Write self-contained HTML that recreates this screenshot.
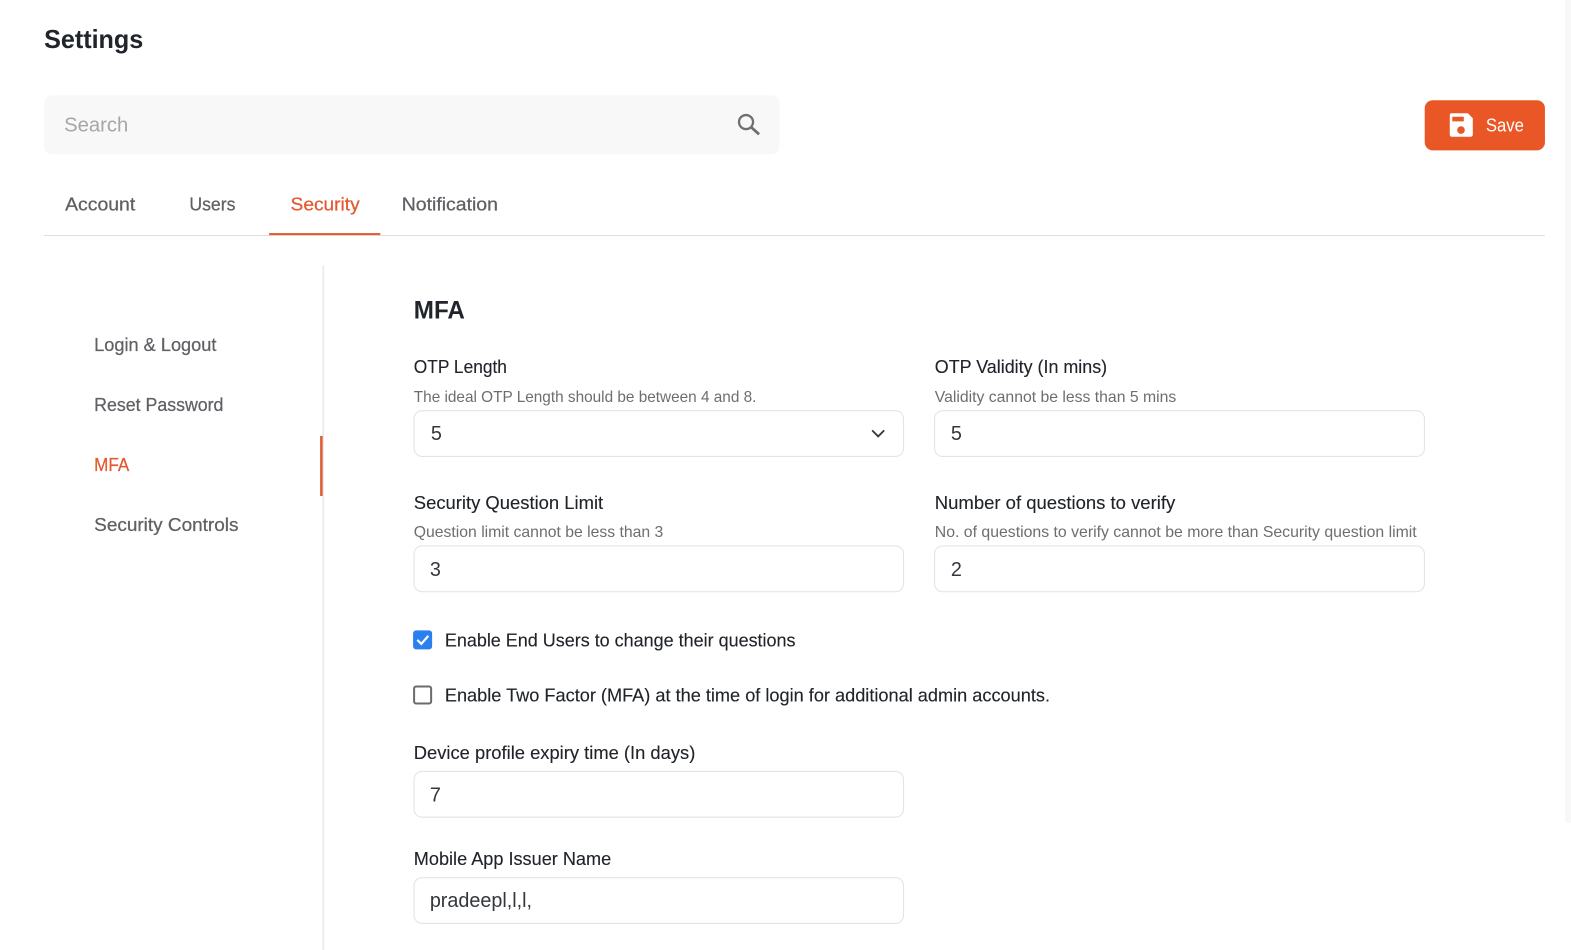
<!DOCTYPE html>
<html lang="en">
<head>
<meta charset="utf-8">
<title>Settings</title>
<style>
html,body{margin:0;padding:0;background:#fff;width:1571px;height:950px;overflow:hidden}
svg{position:absolute;left:0;top:0;display:block}
text{font-family:"Liberation Sans",sans-serif;white-space:pre}
.lab{font-size:18px;fill:#20242a;stroke:#20242a;stroke-width:.12px}
.sub{font-size:15.5px;fill:#6e6e6e}
.val{font-size:20px;fill:#33373c}
.tab{font-size:18px;fill:#5f6064;stroke:#5f6064;stroke-width:.25px}
.nav{font-size:18px;fill:#606165;stroke:#606165;stroke-width:.25px}
.or{fill:#e35a30;stroke:#e35a30}
.box{fill:#fff;stroke:#e4e4e4;stroke-width:1.1}
</style>
</head>
<body>
<svg width="1571" height="950" viewBox="0 0 1568 948" preserveAspectRatio="none" xmlns="http://www.w3.org/2000/svg">
<rect x="1562" y="0" width="9" height="821" fill="#f8f8f8"/>

<text x="44" y="48" font-size="26" font-weight="700" fill="#20252b" textLength="99" lengthAdjust="spacingAndGlyphs">Settings</text>

<rect x="44" y="95" width="734" height="59" rx="8" fill="#f8f8f8"/>
<text x="64" y="131" font-size="20" fill="#a6a6a6" textLength="64" lengthAdjust="spacingAndGlyphs">Search</text>
<circle cx="744.600" cy="121.800" r="7" fill="none" stroke="#6f6f6f" stroke-width="2.300"/>
<path d="M749.800 127L757.600 134" fill="none" stroke="#6f6f6f" stroke-width="2.800"/>

<rect x="1422" y="100" width="120" height="50" rx="8" fill="#e85725"/>
<path d="M1449 113H1465L1470 118V134.400A2 2 0 0 1 1468 136.400H1449A2 2 0 0 1 1447 134.400V115A2 2 0 0 1 1449 113Z" fill="#fff"/>
<rect x="1449.500" y="116.500" width="11.500" height="4.600" fill="#e85725"/>
<circle cx="1458.200" cy="129.800" r="3.800" fill="#e85725"/>
<text x="1483" y="131" font-size="18" fill="#fff" textLength="38" lengthAdjust="spacingAndGlyphs">Save</text>

<text class="tab" x="65" y="210" textLength="70" lengthAdjust="spacingAndGlyphs">Account</text>
<text class="tab" x="189" y="210" textLength="46" lengthAdjust="spacingAndGlyphs">Users</text>
<text class="tab or" x="290" y="210" textLength="69" lengthAdjust="spacingAndGlyphs">Security</text>
<text class="tab" x="401" y="210" textLength="96" lengthAdjust="spacingAndGlyphs">Notification</text>
<rect x="44" y="234.500" width="1498" height="1" fill="#dfdfdf"/>
<rect x="268.600" y="232.600" width="111" height="2" fill="#e35a30"/>

<rect x="322" y="265" width="1" height="683" fill="#dedede"/>
<rect x="319.500" y="435" width="2.500" height="60" fill="#e35a30"/>
<text class="nav" x="94" y="350.300" textLength="122" lengthAdjust="spacingAndGlyphs">Login &amp; Logout</text>
<text class="nav" x="94" y="410" textLength="129" lengthAdjust="spacingAndGlyphs">Reset Password</text>
<text class="nav or" x="94" y="470" textLength="35" lengthAdjust="spacingAndGlyphs">MFA</text>
<text class="nav" x="94" y="530" textLength="144" lengthAdjust="spacingAndGlyphs">Security Controls</text>

<text x="413" y="318" font-size="25" font-weight="700" fill="#20252b" textLength="51" lengthAdjust="spacingAndGlyphs">MFA</text>

<text class="lab" x="413" y="372" textLength="93" lengthAdjust="spacingAndGlyphs">OTP Length</text>
<text class="sub" x="413" y="401" textLength="342" lengthAdjust="spacingAndGlyphs">The ideal OTP Length should be between 4 and 8.</text>
<rect class="box" x="413.300" y="409.800" width="488.500" height="45.700" rx="8"/>
<text class="val" x="430" y="439" textLength="11" lengthAdjust="spacingAndGlyphs">5</text>
<path d="M870.500 429.500L876.500 435.500L882.500 429.500" fill="none" stroke="#33373c" stroke-width="1.800"/>

<text class="lab" x="933" y="372" textLength="172" lengthAdjust="spacingAndGlyphs">OTP Validity (In mins)</text>
<text class="sub" x="933" y="401" textLength="241" lengthAdjust="spacingAndGlyphs">Validity cannot be less than 5 mins</text>
<rect class="box" x="932.800" y="409.800" width="488.900" height="45.700" rx="8"/>
<text class="val" x="949" y="439" textLength="11" lengthAdjust="spacingAndGlyphs">5</text>

<text class="lab" x="413" y="508" textLength="189" lengthAdjust="spacingAndGlyphs">Security Question Limit</text>
<text class="sub" x="413" y="536" textLength="249" lengthAdjust="spacingAndGlyphs">Question limit cannot be less than 3</text>
<rect class="box" x="413.300" y="544.800" width="488.500" height="45.700" rx="8"/>
<text class="val" x="429" y="575" textLength="11" lengthAdjust="spacingAndGlyphs">3</text>

<text class="lab" x="933" y="508" textLength="240" lengthAdjust="spacingAndGlyphs">Number of questions to verify</text>
<text class="sub" x="933" y="536" textLength="481" lengthAdjust="spacingAndGlyphs">No. of questions to verify cannot be more than Security question limit</text>
<rect class="box" x="932.800" y="544.800" width="488.900" height="45.700" rx="8"/>
<text class="val" x="949" y="575" textLength="11" lengthAdjust="spacingAndGlyphs">2</text>

<rect x="412.300" y="629" width="19" height="19" rx="3" fill="#2a80ef"/>
<path d="M416.500 638.500L420.500 642.500L427.500 634.500" fill="none" stroke="#fff" stroke-width="2.200"/>
<text class="lab" x="444" y="645" textLength="350" lengthAdjust="spacingAndGlyphs">Enable End Users to change their questions</text>

<rect x="413.300" y="685" width="17" height="17" rx="2" fill="#fff" stroke="#6b6b6b" stroke-width="2"/>
<text class="lab" x="444" y="700" textLength="604" lengthAdjust="spacingAndGlyphs">Enable Two Factor (MFA) at the time of login for additional admin accounts.</text>

<text class="lab" x="413" y="757.300" textLength="281" lengthAdjust="spacingAndGlyphs">Device profile expiry time (In days)</text>
<rect class="box" x="413.300" y="769.800" width="488.500" height="45.700" rx="8"/>
<text class="val" x="429" y="800" textLength="11" lengthAdjust="spacingAndGlyphs">7</text>

<text class="lab" x="413" y="863" textLength="197" lengthAdjust="spacingAndGlyphs">Mobile App Issuer Name</text>
<rect class="box" x="413.300" y="875.800" width="488.500" height="45.700" rx="8"/>
<text class="val" x="429" y="905" textLength="102" lengthAdjust="spacingAndGlyphs">pradeepl,l,l,</text>
</svg>
</body>
</html>
